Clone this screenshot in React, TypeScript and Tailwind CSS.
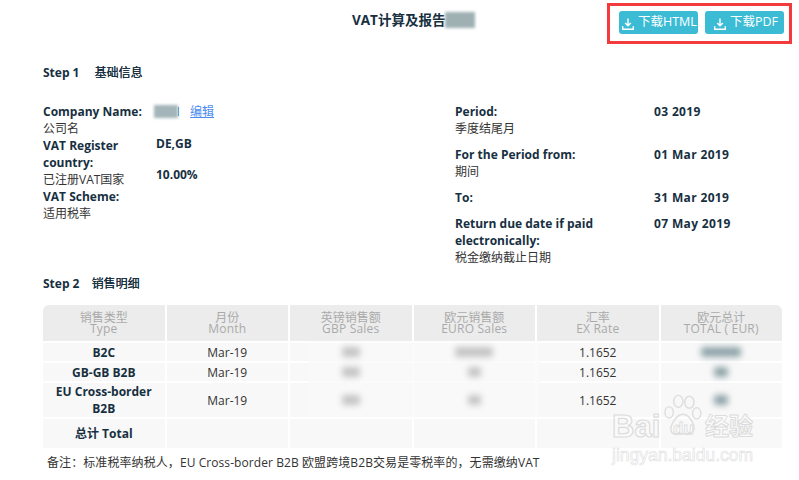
const font = { fontFamily: '"Open Sans","Noto Sans CJK SC",sans-serif' };

function DownloadIcon() {
  return (
    <svg width="12" height="12" viewBox="0 0 12 12" fill="none" stroke="white" strokeWidth="1.4" className="shrink-0">
      <path d="M6 0.5V7.5M3.2 5L6 7.8L8.8 5" />
      <path d="M0.7 8.2V11.2H11.3V8.2" />
    </svg>
  );
}

function Btn({ label, pad }: { label: string; pad: string }) {
  return (
    <div className={`flex h-[23px] w-[79px] items-center gap-[4px] rounded-[3px] bg-[#3bbcd4] text-[12.5px] text-white ${pad}`}>
      <div className="pt-[3px]"><DownloadIcon /></div>
      <span className="whitespace-nowrap">{label}</span>
    </div>
  );
}

function Field({ en, zh }: { en: string[]; zh?: string }) {
  return (
    <div className="leading-[17px]">
      {en.map((t) => <div key={t} className="font-bold text-[#17303f]">{t}</div>)}
      {zh && <div className="text-[#333]">{zh}</div>}
    </div>
  );
}

function Head({ zh, en, first, last }: { zh: string; en: string; first?: boolean; last?: boolean }) {
  return (
    <div className={`flex flex-col items-center justify-center bg-[#ececec] text-[12px] leading-[11px] text-[#aaa] ${first ? 'rounded-tl-[6px]' : ''} ${last ? 'rounded-tr-[6px]' : ''}`}>
      <div>{zh}</div>
      <div className="tracking-[0.2px]">{en}</div>
    </div>
  );
}

function Cell({ children, bold }: { children?: React.ReactNode; bold?: boolean }) {
  return (
    <div className={`flex items-center justify-center bg-[#f8f8f8] text-center text-[12px] leading-[17px] ${bold ? 'font-bold text-[#17303f]' : 'text-[#333]'}`}>
      {children}
    </div>
  );
}

function Blur({ w, dark }: { w: string; dark?: boolean }) {
  return <span className={`relative z-10 block h-[10px] rounded-[3px] blur-[3px] ${w} ${dark ? 'bg-[#8fa3a8]' : 'bg-[#c4c4c4]'}`} />;
}

const rows = [
  { name: 'B2C', gbp: 'w-[18px]', eur: 'w-[38px]', tot: 'w-[40px]' },
  { name: 'GB-GB B2B', gbp: 'w-[18px]', eur: 'w-[13px]', tot: 'w-[14px]' },
  { name: 'EU Cross-border B2B', gbp: 'w-[18px]', eur: 'w-[13px]', tot: 'w-[14px]' },
];

export default function App() {
  return (
    <div style={font} className="relative h-[480px] w-[799px] overflow-hidden bg-white text-[12px]">
      <header className="relative h-[44px]">
        <h1 className="pl-[352px] pt-[11px] text-[13.5px] font-bold leading-[18px] text-[#17303f]">
          <span className="inline-flex items-center">
            VAT计算及报告
            <span className="block h-[16px] w-[30px] bg-[#9fb0b3] blur-[1.5px]" />
          </span>
        </h1>
        <div className="absolute left-[619px] top-[11px] flex gap-[7px]">
          <Btn label="下载HTML" pad="pl-[3px]" />
          <Btn label="下载PDF" pad="pl-[9px]" />
        </div>
      </header>

      <main className="px-[43px]">
        <div className="mt-[20px] flex h-[17px] items-center gap-[15px] font-bold text-[#17303f]">
          <span>Step 1</span>
          <span className="font-normal [text-shadow:0.3px_0_0_#17303f]">基础信息</span>
        </div>

        <section className="mt-[22px] flex h-[168px]">
          <div className="flex w-[412px]">
            <div className="w-[113px]">
              <Field en={['Company Name:']} zh="公司名" />
              <Field en={['VAT Register', 'country:']} zh="已注册VAT国家" />
              <Field en={['VAT Scheme:']} zh="适用税率" />
            </div>
            <div className="font-bold leading-[17px] text-[#17303f]">
              <div className="flex h-[17px] items-center">
                <span className="ml-[-2px] block h-[13px] w-[24px] bg-[#a3b5b8] blur-[1.5px]" />
                <span className="h-[9px] w-[1px] bg-[#2f9fd0]" />
                <span className="ml-[11px] font-normal text-[#4a8cf0] underline">编辑</span>
              </div>
              <div className="mt-[15px]">DE,GB</div>
              <div className="mt-[14px]">10.00%</div>
            </div>
          </div>
          <div className="flex flex-col gap-[9px]">
            {[
              { en: ['Period:'], zh: '季度结尾月', v: '03 2019' },
              { en: ['For the Period from:'], zh: '期间', v: '01 Mar 2019' },
              { en: ['To:'], v: '31 Mar 2019' },
              { en: ['Return due date if paid', 'electronically:'], zh: '税金缴纳截止日期', v: '07 May 2019' },
            ].map((r) => (
              <div key={r.v} className="flex">
                <div className="w-[199px]"><Field en={r.en} zh={r.zh} /></div>
                <div className="font-bold leading-[17px] tracking-[0.35px] text-[#17303f]">{r.v}</div>
              </div>
            ))}
          </div>
        </section>

        <div className="mt-[4px] flex h-[17px] items-center gap-[12px] font-bold text-[#17303f]">
          <span>Step 2</span>
          <span className="font-normal [text-shadow:0.3px_0_0_#17303f]">销售明细</span>
        </div>

        <section className="relative mt-[13px] grid w-[739px] grid-cols-6 grid-rows-[36px_18px_18px_34px_29px] gap-[2px]">
          <Head first zh="销售类型" en="Type" />
          <Head zh="月份" en="Month" />
          <Head zh="英镑销售额" en="GBP Sales" />
          <Head zh="欧元销售额" en="EURO Sales" />
          <Head zh="汇率" en="EX Rate" />
          <Head last zh="欧元总计" en="TOTAL ( EUR)" />
          {rows.map((r) => (
            <div key={r.name} className="contents">
              <Cell bold>{r.name}</Cell>
              <Cell>Mar-19</Cell>
              <Cell><Blur w={r.gbp} /></Cell>
              <Cell><Blur w={r.eur} /></Cell>
              <Cell>1.1652</Cell>
              <Cell><Blur w={r.tot} dark /></Cell>
            </div>
          ))}
          <Cell bold>总计 Total</Cell>
          <Cell />
          <Cell />
          <Cell />
          <Cell />
          <Cell />
          <div className="absolute left-[265px] top-[37px] h-[75px] w-[232px] bg-[#fafafa]/70 blur-[1px]" />
        </section>

        <p className="mt-[6px] pl-[4px] leading-[17px] tracking-[0.08px] text-[#333]">
          备注：标准税率纳税人，EU Cross-border B2B 欧盟跨境B2B交易是零税率的，无需缴纳VAT
        </p>
      </main>

      {/* red annotation */}
      <div className="absolute left-[607px] top-[3px] h-[41px] w-[185px] border-[3px] border-[#f33a3d]" />

      {/* watermark */}
      <div className="pointer-events-none absolute left-[612px] top-[393px] h-[72px] w-[142px]">
        <svg width="46" height="46" viewBox="0 0 46 50" className="absolute left-[47px] top-[1px]" fill="none" stroke="#dedede" strokeWidth="1.6">
          <ellipse cx="9" cy="20" rx="4.5" ry="6" />
          <ellipse cx="19" cy="8" rx="5" ry="6.5" />
          <ellipse cx="31" cy="9" rx="5" ry="6.5" />
          <ellipse cx="39" cy="21" rx="4.5" ry="6" />
          <path d="M24 22C31 22 40 36 34 42C30 46 27 43 24 43C20 43 16 46 12 42C8 36 17 22 24 22Z" />
        </svg>
        <div style={{ fontFamily: '"Liberation Sans",sans-serif' }} className="absolute left-0 top-[17px] text-[31px] font-bold leading-[34px] text-white/40 [-webkit-text-stroke:1.2px_#dcdcdc]">Bai</div>
        <div style={{ fontFamily: '"Liberation Sans",sans-serif' }} className="absolute left-[61px] top-[27px] text-[17px] font-bold leading-[18px] text-white/40 [-webkit-text-stroke:0.8px_#dcdcdc]">du</div>
        <div className="absolute left-[93px] top-[18px] whitespace-nowrap text-[24px] font-bold leading-[30px] text-white/40 [-webkit-text-stroke:1px_#dcdcdc]">经验</div>
        <div style={{ fontFamily: '"Liberation Sans",sans-serif' }} className="absolute left-0 top-[52px] whitespace-nowrap text-[17.5px] leading-[20px] text-white/50 [-webkit-text-stroke:0.6px_#dedede]">jingyan.baidu.com</div>
      </div>
    </div>
  );
}
